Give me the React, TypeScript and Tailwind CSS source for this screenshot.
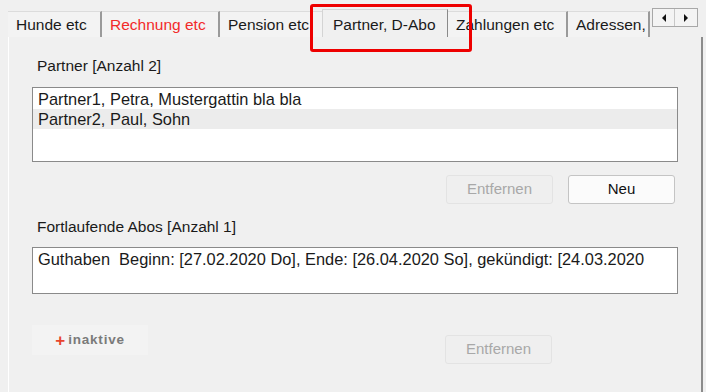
import React from 'react';

const font = { fontFamily: '"Liberation Sans", Arial, sans-serif' };

type Tab = { label: string; width: string; red?: boolean; active?: boolean; clipped?: boolean };

const tabs: Tab[] = [
  { label: 'Hunde etc', width: 'w-[94px]' },
  { label: 'Rechnung etc', width: 'w-[118px]', red: true },
  { label: 'Pension etc', width: 'w-[102px]', clipped: true },
  { label: 'Partner, D-Abo', width: 'w-[126px]', active: true },
  { label: 'Zahlungen etc', width: 'w-[120px]' },
  { label: 'Adressen, Kontakt', width: 'w-[82px]' },
];

function tabClass(t: Tab) {
  let c = '';
  if (t.active) {
    c = 'h-[28px] border-x border-t border-[#d4d4d4] border-r-[#8a8a8a] bg-[#f0f0f0] pl-[10px] pt-[6px] ';
  } else if (t.clipped) {
    c = 'h-[26px] border-t border-t-[#dcdcdc] bg-[#f3f3f3] pl-[8px] pt-[4px] ';
  } else {
    c = 'h-[26px] border-t border-r-2 border-t-[#dcdcdc] border-r-[#9a9a9a] bg-[#f3f3f3] pl-[8px] pt-[4px] ';
  }
  return (
    c +
    t.width +
    ' overflow-hidden whitespace-nowrap text-[15.5px] leading-[18px] ' +
    (t.red ? 'text-[#f22a2a]' : 'text-[#1a1a1a]')
  );
}

function Button({ children, disabled }: { children: React.ReactNode; disabled?: boolean }) {
  return (
    <button
      type="button"
      className={
        disabled
          ? 'flex h-[29px] w-[107px] items-center justify-center rounded-[3px] border border-[#e3e3e3] bg-[#efefef] text-[15px] text-[#a8a8a8]'
          : 'flex h-[29px] w-[107px] items-center justify-center rounded-[3px] border border-[#c4c4c4] bg-[#fbfbfb] text-[15px] text-[#111]'
      }
    >
      {children}
    </button>
  );
}

export default function App() {
  return (
    <div style={font} className="relative h-[392px] w-[706px] overflow-hidden bg-[#f0f0f0] text-[#1a1a1a]">
      {/* tab strip */}
      <div className="flex h-[37px] items-end pl-[8px]">
        {tabs.map((t) => (
          <div key={t.label} className={tabClass(t)}>
            {t.clipped ? <div className="w-[85px] overflow-hidden">{t.label}</div> : t.label}
          </div>
        ))}
        <div className="mb-[10px] ml-[2px] flex h-[19px] border border-[#a8a8a8] bg-[#f4f4f4]">
          <div className="flex w-[22px] items-center justify-center border-r border-[#c8c8c8]">
            <svg width="6" height="8" viewBox="0 0 6 8">
              <path d="M5 0 L1 4 L5 8 Z" fill="#111" />
            </svg>
          </div>
          <div className="flex w-[22px] items-center justify-center">
            <svg width="6" height="8" viewBox="0 0 6 8">
              <path d="M1 0 L5 4 L1 8 Z" fill="#111" />
            </svg>
          </div>
        </div>
      </div>

      {/* page */}
      <div className="ml-[8px] mr-[3px] h-[360px] border-l border-white border-r-2 border-r-[#8c8c8c] bg-[#f0f0f0] pl-[23px] pr-[23px] pt-[20px]">
        <div className="pl-[5px] text-[15.5px] leading-[18px]">Partner [Anzahl 2]</div>
        <div className="mt-[12px] h-[75px] w-[646px] border border-[#8a8a8a] bg-white pt-[1px] text-[16.4px] leading-[20px]">
          <div className="px-[5px]">Partner1, Petra, Mustergattin bla bla</div>
          <div className="bg-[#ececec] px-[5px]">Partner2, Paul, Sohn</div>
        </div>
        <div className="mt-[13px] flex w-[643px] justify-end gap-[15px]">
          <Button disabled>Entfernen</Button>
          <Button>Neu</Button>
        </div>

        <div className="mt-[14px] pl-[5px] text-[15.5px] leading-[18px]">Fortlaufende Abos [Anzahl 1]</div>
        <div className="mt-[11px] h-[47px] w-[646px] whitespace-nowrap border border-[#8a8a8a] bg-white px-[5px] pt-[1px] text-[16.4px] leading-[20px]">
          Guthaben&nbsp;&nbsp;Beginn: [27.02.2020 Do], Ende: [26.04.2020 So], gekündigt: [24.03.2020
        </div>
        <div className="mt-[8px] flex items-start">
          <div className="mt-[23px] flex h-[30px] w-[116px] items-center justify-center gap-[3px] bg-[#f3f3f3] text-[13.5px] font-bold text-[#7a7a7a]">
            <span className="text-[17px] leading-none text-[#e8452c]">+</span>
            <span className="tracking-[0.8px]">inaktive</span>
          </div>
          <div className="ml-[297px] mt-[33px]">
            <Button disabled>Entfernen</Button>
          </div>
        </div>
      </div>

      {/* highlight annotation */}
      <div className="absolute left-[310px] top-[4px] h-[48px] w-[162px] rounded-[3px] border-[3px] border-[#ee0000]" />
    </div>
  );
}
